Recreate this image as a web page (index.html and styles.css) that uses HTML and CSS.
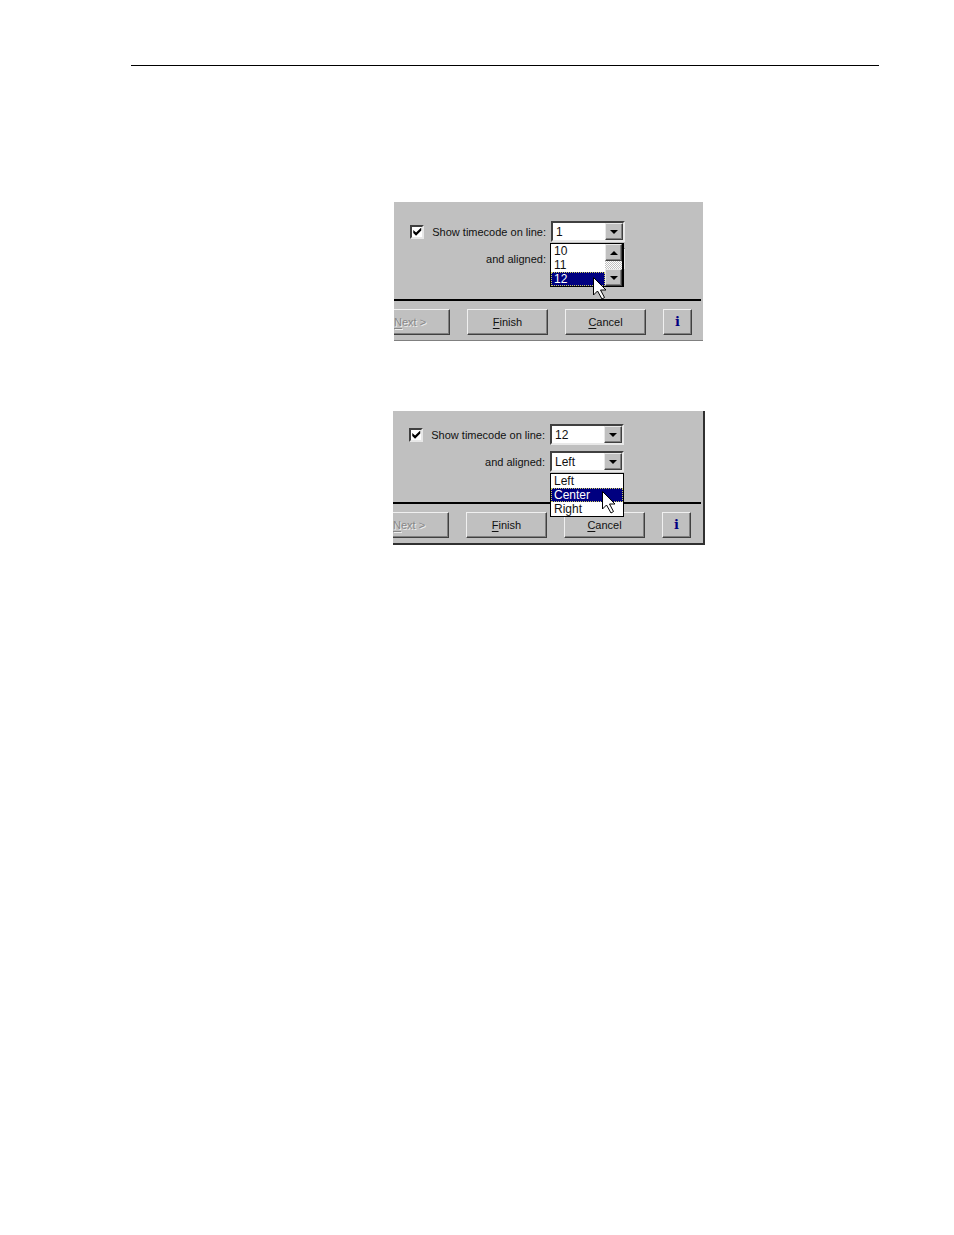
FILE: index.html
```
<!DOCTYPE html>
<html lang="en">
<head>
<meta charset="utf-8">
<title>Timecode settings</title>
<link rel="stylesheet" href="styles.css">
</head>
<body>
<svg class="defs" aria-hidden="true">
  <symbol id="pointer" viewBox="0 0 14 23"><path d="M.5.5V18l4-4 4.500 8 2.500-1.500L7.500 13H13z" fill="#fff" stroke="#000"/></symbol>
  <symbol id="down" viewBox="0 0 8 4"><path d="M0 0h8L4 4z"/></symbol>
  <symbol id="up" viewBox="0 0 8 4"><path d="M0 4h8L4 0z"/></symbol>
</svg>
<main class="page">
  <hr class="page-rule">

  <section class="panel" aria-label="Timecode line">
    <div class="form">
      <label class="check"><input type="checkbox" checked>Show timecode on line:</label>
      <div class="field">
        <select class="combo" aria-label="Timecode line"><option>1</option></select>
        <span class="arrow"><svg><use href="#down"/></svg></span>
        <div class="popup popup-scroll">
          <ul class="options" role="listbox" aria-label="Lines">
            <li role="option">10</li>
            <li role="option">11</li>
            <li class="active" role="option" aria-selected="true">12</li>
          </ul>
          <div class="scrollbar">
            <button class="scroll" type="button" aria-label="Scroll up"><svg><use href="#up"/></svg></button>
            <button class="scroll" type="button" aria-label="Scroll down"><svg><use href="#down"/></svg></button>
          </div>
          <svg class="pointer pointer-line"><use href="#pointer"/></svg>
        </div>
      </div>
      <label class="caption" for="align-a">and aligned:</label>
      <div class="field">
        <select class="combo" id="align-a"><option>Left</option></select>
      </div>
    </div>
    <hr class="divider">
    <div class="actions">
      <button class="btn next" type="button" disabled><u>N</u>ext &gt;</button>
      <button class="btn" type="button"><span><u>F</u>inish</span></button>
      <button class="btn" type="button"><span><u>C</u>ancel</span></button>
      <button class="btn info" type="button">i</button>
    </div>
  </section>

  <section class="panel panel-edge" aria-label="Timecode alignment">
    <div class="form">
      <label class="check"><input type="checkbox" checked>Show timecode on line:</label>
      <div class="field">
        <select class="combo" aria-label="Timecode line"><option>12</option></select>
        <span class="arrow"><svg><use href="#down"/></svg></span>
      </div>
      <label class="caption" for="align-b">and aligned:</label>
      <div class="field">
        <select class="combo" id="align-b"><option>Left</option></select>
        <span class="arrow"><svg><use href="#down"/></svg></span>
        <div class="popup">
          <ul class="options" role="listbox" aria-label="Alignments">
            <li role="option">Left</li>
            <li class="active" role="option" aria-selected="true">Center</li>
            <li role="option">Right</li>
          </ul>
          <svg class="pointer pointer-align"><use href="#pointer"/></svg>
        </div>
      </div>
    </div>
    <hr class="divider">
    <div class="actions">
      <button class="btn next" type="button" disabled><u>N</u>ext &gt;</button>
      <button class="btn" type="button"><span><u>F</u>inish</span></button>
      <button class="btn" type="button"><span><u>C</u>ancel</span></button>
      <button class="btn info" type="button">i</button>
    </div>
  </section>
</main>
</body>
</html>
```
FILE: styles.css
```
* { box-sizing: border-box; }

body {
  margin: 0;
  background: #fff;
  color: #111;
  font: 11px/14px "Liberation Sans", Arial, sans-serif;
}

.defs { position: absolute; width: 0; height: 0; }

.page { padding: 65px 75px 65px 131px; }

.page-rule {
  height: 1px;
  margin: 0 0 136px;
  border: 0;
  background: #000;
}

.panel {
  width: 100%;
  max-width: 309px;
  margin: 0 0 70px 263px;
  padding: 19px 0 5px;
  border-bottom: 1px solid #808080;
  background: #c0c0c0;
}

.panel-edge {
  max-width: 312px;
  margin-left: 262px;
  padding-top: 13px;
  border-right: 2px solid #303030;
  border-bottom: 2px solid #303030;
}

.form {
  display: grid;
  grid-template-columns: 152px 74px;
  grid-auto-rows: 21px;
  gap: 6px 5px;
  align-items: center;
}

.check {
  display: flex;
  align-items: center;
  justify-content: flex-end;
  gap: 8px;
  white-space: nowrap;
}

.check input {
  appearance: none;
  width: 14px;
  height: 14px;
  margin: 0;
  border: 2px solid;
  border-color: #404040 #e8e8e8 #e8e8e8 #404040;
  background: #fff;
}

.check input:checked::before {
  content: "";
  display: block;
  height: 10px;
  background: #000;
  clip-path: polygon(10% 35%, 38% 60%, 90% 10%, 90% 40%, 38% 92%, 10% 65%);
}

.caption { text-align: right; }

.field { position: relative; height: 21px; }

.combo {
  appearance: none;
  width: 100%;
  height: 21px;
  padding: 0 20px 0 3px;
  border: 2px solid;
  border-color: #404040 #e8e8e8 #e8e8e8 #404040;
  border-radius: 0;
  background: #fff;
  color: #111;
  font: inherit;
  font-size: 12px;
}

.arrow, .scroll {
  display: flex;
  align-items: center;
  justify-content: center;
  border: 1px solid;
  border-color: #e8e8e8 #404040 #404040 #e8e8e8;
  background: #c0c0c0;
  box-shadow: inset -1px -1px #808080;
}

.arrow {
  position: absolute;
  top: 2px;
  right: 2px;
  width: 18px;
  height: 17px;
  pointer-events: none;
}

.arrow svg, .scroll svg { width: 8px; height: 4px; }

.popup {
  position: absolute;
  z-index: 1;
  top: 22px;
  left: 0;
  display: flex;
  width: 74px;
  border: 1px solid #000;
  background: #fff;
  font-size: 12px;
}

.popup-scroll { left: -1px; border-right-width: 2px; }

.options {
  flex: 1;
  margin: 0;
  padding: 0;
  list-style: none;
}

.options li { height: 14px; padding-left: 3px; }

.options .active {
  background: #000080;
  color: #fff;
  outline: 1px dotted #c8c860;
  outline-offset: -1px;
}

.scrollbar {
  display: flex;
  flex-direction: column;
  justify-content: space-between;
  width: 17px;
  background: repeating-conic-gradient(#c0c0c0 0 25%, #fff 0 50%) 0 0 / 2px 2px;
}

.scroll { width: 17px; height: 17px; padding: 0; }

.pointer { position: absolute; width: 14px; height: 23px; }
.pointer-line { top: 33px; left: 42px; }
.pointer-align { top: 17px; left: 51px; }

.divider {
  height: 2px;
  margin: 30px 2px 8px 0;
  border: 0;
  background: #000;
}

.actions { display: flex; gap: 17px; }

.btn {
  width: 81px;
  height: 26px;
  padding: 0;
  border: 1px solid;
  border-color: #f0f0f0 #404040 #404040 #f0f0f0;
  background: #c0c0c0;
  box-shadow: inset -1px -1px #808080;
  color: #111;
  font: inherit;
}

.btn u { text-underline-offset: 2px; }

.next {
  width: 56px;
  border-left: 0;
  color: #888;
  text-align: left;
  text-shadow: 1px 1px #eee;
}

.info {
  width: 29px;
  color: #000080;
  font: bold 13px/16px "DejaVu Serif", serif;
}
```
